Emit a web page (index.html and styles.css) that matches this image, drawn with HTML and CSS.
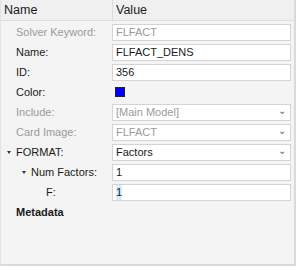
FILE: index.html
```html
<!DOCTYPE html>
<html>

<head>
    <link rel="stylesheet" href="styles.css">
</head>

<body>
    <div class="panel">
        <div class="header">
            <div class="hcell name">Name</div>
            <div class="hcell">Value</div>
        </div>
        <div class="rows">
            <div class="row">
                <div class="label off">Solver Keyword:</div>
                <div class="value"><div class="box off">FLFACT</div></div>
            </div>
            <div class="row">
                <div class="label">Name:</div>
                <div class="value"><div class="box">FLFACT_DENS</div></div>
            </div>
            <div class="row">
                <div class="label">ID:</div>
                <div class="value"><div class="box">356</div></div>
            </div>
            <div class="row">
                <div class="label">Color:</div>
                <div class="value"><span class="swatch"></span></div>
            </div>
            <div class="row">
                <div class="label off">Include:</div>
                <div class="value"><div class="box off drop">[Main Model]<span class="chev">&#8964;</span></div></div>
            </div>
            <div class="row">
                <div class="label off">Card Image:</div>
                <div class="value"><div class="box off drop">FLFACT<span class="chev">&#8964;</span></div></div>
            </div>
            <div class="row">
                <div class="label"><span class="tri"></span>FORMAT:</div>
                <div class="value"><div class="box drop">Factors<span class="chev">&#8964;</span></div></div>
            </div>
            <div class="row">
                <div class="label lvl1"><span class="tri"></span>Num Factors:</div>
                <div class="value"><div class="box">1</div></div>
            </div>
            <div class="row">
                <div class="label lvl2">F:</div>
                <div class="value"><div class="box"><span class="sel">1</span></div></div>
            </div>
            <div class="row">
                <div class="label bold">Metadata</div>
            </div>
        </div>
    </div>
</body>

</html>
```

FILE: styles.css
```css
body {
    margin: 0;
    font-family: "Liberation Sans", Arial, sans-serif;
    background: #ffffff;
}

.panel {
    width: 296px;
    height: 266px;
    background: #f4f4f4;
    border-right: 2px solid #dadada;
    border-bottom: 2px solid #dadada;
    border-left: 1px solid #e2e2e2;
    box-sizing: border-box;
    color: #1a1a1a;
}

.header {
    display: flex;
    height: 21px;
    background: #f0f0f0;
    border-bottom: 1px solid #dcdcdc;
    box-sizing: border-box;
}

.hcell {
    font-size: 12.5px;
    line-height: 20px;
    padding-left: 3px;
}

.hcell.name {
    width: 108px;
    border-right: 1px solid #dcdcdc;
}

.rows {
    padding-top: 1px;
}

.row {
    display: flex;
    height: 20px;
    align-items: center;
}

.label {
    width: 111px;
    flex: none;
    font-size: 11px;
    padding-left: 15px;
    box-sizing: border-box;
    display: flex;
    align-items: center;
    position: relative;
}

.label.lvl1 {
    padding-left: 30px;
}

.label.lvl2 {
    padding-left: 45px;
}

.off {
    color: #9a9a9a;
}

.bold {
    font-weight: bold;
}

.tri {
    position: absolute;
    margin-left: -9px;
    width: 0;
    height: 0;
    border-left: 2.5px solid transparent;
    border-right: 2.5px solid transparent;
    border-top: 3px solid #333;
}

.value {
    flex: 1;
    padding-right: 3px;
}

.box {
    height: 17px;
    background: #ffffff;
    border: 1px solid #d4d4d4;
    box-sizing: border-box;
    font-size: 11px;
    line-height: 15px;
    padding-left: 3px;
    display: flex;
    justify-content: space-between;
}

.box.off {
    color: #9a9a9a;
}

.chev {
    color: #666;
    font-size: 10px;
    line-height: 12px;
    padding-right: 4px;
}

.swatch {
    display: block;
    width: 8px;
    height: 8px;
    margin-left: 3px;
    background: #0000ff;
    border: 1px solid #222;
}

.sel {
    background: #d8ecfa;
}
```
